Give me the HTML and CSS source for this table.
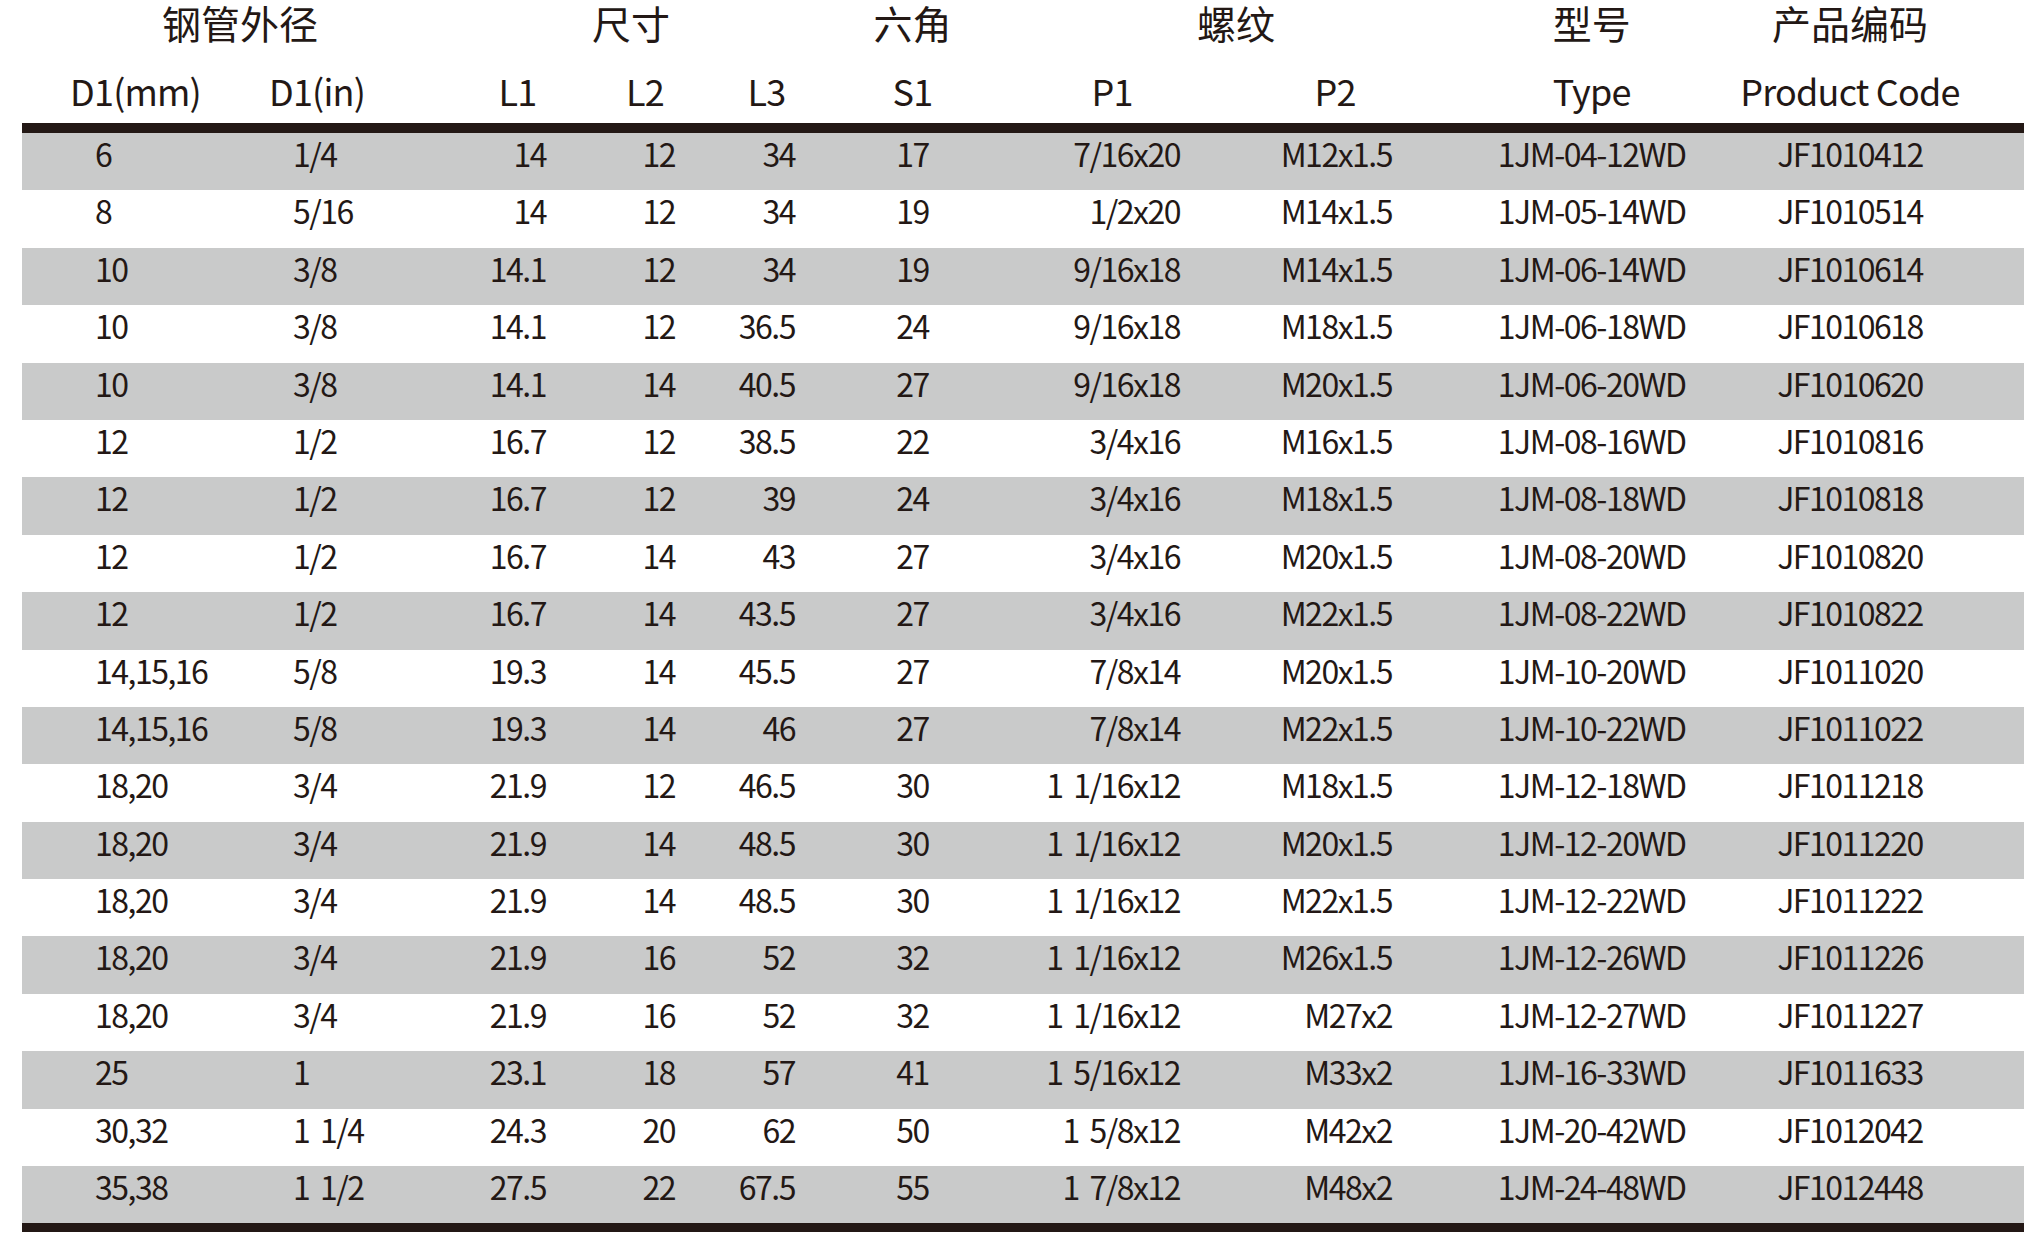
FILE: index.html
```html
<!DOCTYPE html>
<html lang="zh">
<head>
<meta charset="utf-8">
<title>Spec table</title>
<link rel="stylesheet" href="styles.css">
</head>
<body>
<div class="sheet">
  <div class="row groups">
    <div class="g-pipe">钢管外径</div>
    <div class="g-size">尺寸</div>
    <div class="g-hex">六角</div>
    <div class="g-thread">螺纹</div>
    <div class="g-type">型号</div>
    <div class="g-code">产品编码</div>
  </div>
  <div class="row labels">
    <div>D1(mm)</div>
    <div>D1(in)</div>
    <div class="l-l1">L1</div>
    <div>L2</div>
    <div>L3</div>
    <div>S1</div>
    <div>P1</div>
    <div>P2</div>
    <div>Type</div>
    <div>Product Code</div>
  </div>
  <div class="rows">
    <div class="row data"><span>6</span><span>1/4</span><span>14</span><span>12</span><span>34</span><span>17</span><span>7/16x20</span><span>M12x1.5</span><span>1JM-04-12WD</span><span>JF1010412</span></div>
    <div class="row data"><span>8</span><span>5/16</span><span>14</span><span>12</span><span>34</span><span>19</span><span>1/2x20</span><span>M14x1.5</span><span>1JM-05-14WD</span><span>JF1010514</span></div>
    <div class="row data"><span>10</span><span>3/8</span><span>14.1</span><span>12</span><span>34</span><span>19</span><span>9/16x18</span><span>M14x1.5</span><span>1JM-06-14WD</span><span>JF1010614</span></div>
    <div class="row data"><span>10</span><span>3/8</span><span>14.1</span><span>12</span><span>36.5</span><span>24</span><span>9/16x18</span><span>M18x1.5</span><span>1JM-06-18WD</span><span>JF1010618</span></div>
    <div class="row data"><span>10</span><span>3/8</span><span>14.1</span><span>14</span><span>40.5</span><span>27</span><span>9/16x18</span><span>M20x1.5</span><span>1JM-06-20WD</span><span>JF1010620</span></div>
    <div class="row data"><span>12</span><span>1/2</span><span>16.7</span><span>12</span><span>38.5</span><span>22</span><span>3/4x16</span><span>M16x1.5</span><span>1JM-08-16WD</span><span>JF1010816</span></div>
    <div class="row data"><span>12</span><span>1/2</span><span>16.7</span><span>12</span><span>39</span><span>24</span><span>3/4x16</span><span>M18x1.5</span><span>1JM-08-18WD</span><span>JF1010818</span></div>
    <div class="row data"><span>12</span><span>1/2</span><span>16.7</span><span>14</span><span>43</span><span>27</span><span>3/4x16</span><span>M20x1.5</span><span>1JM-08-20WD</span><span>JF1010820</span></div>
    <div class="row data"><span>12</span><span>1/2</span><span>16.7</span><span>14</span><span>43.5</span><span>27</span><span>3/4x16</span><span>M22x1.5</span><span>1JM-08-22WD</span><span>JF1010822</span></div>
    <div class="row data"><span>14,15,16</span><span>5/8</span><span>19.3</span><span>14</span><span>45.5</span><span>27</span><span>7/8x14</span><span>M20x1.5</span><span>1JM-10-20WD</span><span>JF1011020</span></div>
    <div class="row data"><span>14,15,16</span><span>5/8</span><span>19.3</span><span>14</span><span>46</span><span>27</span><span>7/8x14</span><span>M22x1.5</span><span>1JM-10-22WD</span><span>JF1011022</span></div>
    <div class="row data"><span>18,20</span><span>3/4</span><span>21.9</span><span>12</span><span>46.5</span><span>30</span><span>1 1/16x12</span><span>M18x1.5</span><span>1JM-12-18WD</span><span>JF1011218</span></div>
    <div class="row data"><span>18,20</span><span>3/4</span><span>21.9</span><span>14</span><span>48.5</span><span>30</span><span>1 1/16x12</span><span>M20x1.5</span><span>1JM-12-20WD</span><span>JF1011220</span></div>
    <div class="row data"><span>18,20</span><span>3/4</span><span>21.9</span><span>14</span><span>48.5</span><span>30</span><span>1 1/16x12</span><span>M22x1.5</span><span>1JM-12-22WD</span><span>JF1011222</span></div>
    <div class="row data"><span>18,20</span><span>3/4</span><span>21.9</span><span>16</span><span>52</span><span>32</span><span>1 1/16x12</span><span>M26x1.5</span><span>1JM-12-26WD</span><span>JF1011226</span></div>
    <div class="row data"><span>18,20</span><span>3/4</span><span>21.9</span><span>16</span><span>52</span><span>32</span><span>1 1/16x12</span><span>M27x2</span><span>1JM-12-27WD</span><span>JF1011227</span></div>
    <div class="row data"><span>25</span><span>1</span><span>23.1</span><span>18</span><span>57</span><span>41</span><span>1 5/16x12</span><span>M33x2</span><span>1JM-16-33WD</span><span>JF1011633</span></div>
    <div class="row data"><span>30,32</span><span>1 1/4</span><span>24.3</span><span>20</span><span>62</span><span>50</span><span>1 5/8x12</span><span>M42x2</span><span>1JM-20-42WD</span><span>JF1012042</span></div>
    <div class="row data"><span>35,38</span><span>1 1/2</span><span>27.5</span><span>22</span><span>67.5</span><span>55</span><span>1 7/8x12</span><span>M48x2</span><span>1JM-24-48WD</span><span>JF1012448</span></div>
  </div>
</div>
</body>
</html>
```

FILE: styles.css
```css
* { box-sizing: border-box; }

body {
  margin: 0;
  background: #ffffff;
  color: #231815;
  font-family: "Noto Sans CJK SC", "Noto Sans", sans-serif;
}

.sheet {
  margin-left: 22px;
  width: 2002px;
}

.row {
  display: grid;
  grid-template-columns: 227px 136px 195px 130px 113px 179px 220px 226px 287.4px 229.2px;
  padding-right: 59.4px;
  white-space: nowrap;
}

/* group headings */
.groups {
  height: 45px;
  font-size: 39px;
  line-height: 45px;
  text-align: center;
}
.g-pipe { grid-column: 1 / 3; padding-left: 73px; }
.g-size { grid-column: 3 / 6; padding-left: 54px; }
.g-hex { grid-column: 6; }
.g-thread { grid-column: 7 / 9; padding-left: 22px; }
.g-type { grid-column: 9; }
.g-code { grid-column: 10; }

/* column labels */
.labels {
  height: 78px;
  padding-top: 25px;
  font-size: 36px;
  line-height: 40px;
  letter-spacing: -0.8px;
  text-align: center;
}
.labels .l-l1 { padding-left: 70px; }

/* body */
.rows {
  border-top: 10px solid #231815;
  border-bottom: 9px solid #231815;
}

.data {
  height: 57.4px;
  font-size: 32px;
  line-height: 41px;
  letter-spacing: -1.5px;
  word-spacing: 5px;
}
.data:nth-child(odd) { background: #c9caca; }

.data > :nth-child(1) { text-align: left; padding-left: 73px; }
.data > :nth-child(2) { text-align: left; padding-left: 44px; }
.data > :nth-child(3) { text-align: right; padding-right: 34px; }
.data > :nth-child(4) { text-align: right; padding-right: 35px; }
.data > :nth-child(5) { text-align: right; padding-right: 28px; }
.data > :nth-child(6) { text-align: center; }
.data > :nth-child(7) { text-align: right; padding-right: 42px; }
.data > :nth-child(8) { text-align: right; padding-right: 56px; }
.data > :nth-child(9) { text-align: center; }
.data > :nth-child(10) { text-align: center; }
```
